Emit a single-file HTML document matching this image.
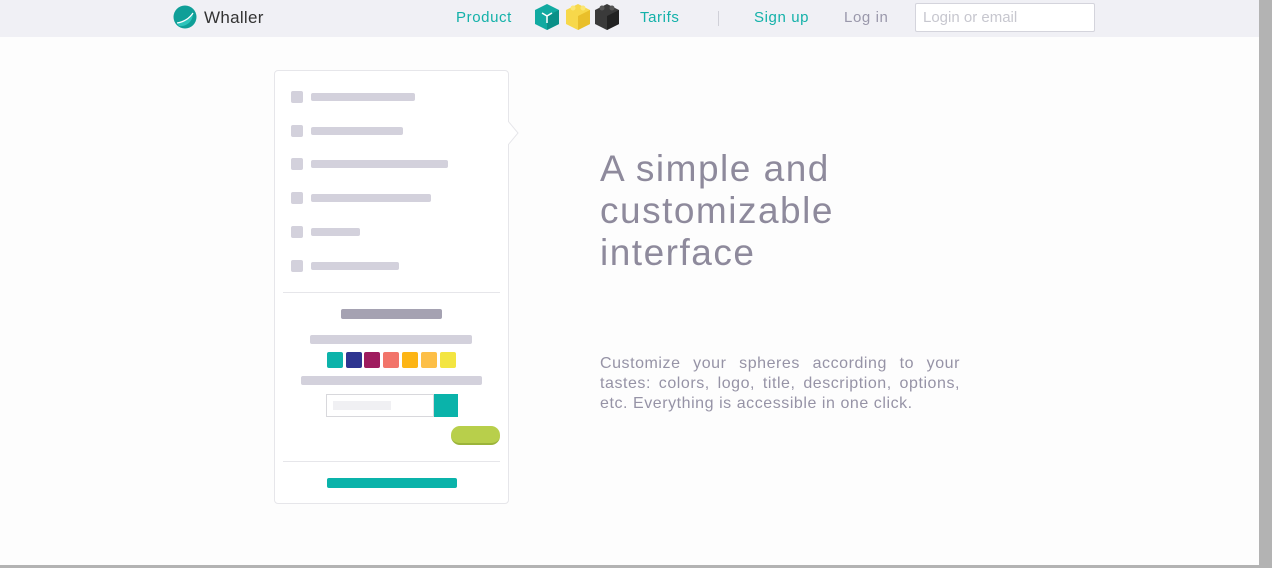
<!DOCTYPE html>
<html><head><meta charset="utf-8"><style>
*{margin:0;padding:0;box-sizing:border-box}
body{width:1272px;height:568px;background:#fdfdfd;font-family:"Liberation Sans",sans-serif;position:relative;overflow:hidden}
.hdr{position:absolute;left:0;top:0;width:1259px;height:37px;background:#f0f0f5}
.sb{position:absolute;left:1259px;top:0;width:13px;height:568px;background:#b3b3b3}
.sbt{position:absolute;left:1259px;top:0;width:13px;height:35px;background:#a7a6ad}
.bb{position:absolute;left:0;top:565px;width:1259px;height:3px;background:#b3b3b3}
.a{position:absolute;font-size:15px;color:#13b1a9;top:9px;letter-spacing:0.6px}
.card{position:absolute;left:274px;top:70px;width:235px;height:434px;background:#fff;border:1px solid #e6e6ea;border-radius:4px}
.b{position:absolute;background:#d3d1dc;border-radius:2px}
.sq{position:absolute;width:12px;height:12px;background:#d3d1dc;border-radius:2px}
.c{position:absolute;top:352px;width:16px;height:16px;border-radius:2px}
</style></head><body>
<div class="hdr"></div>
<div class="sbt"></div><div class="sb"></div><div class="bb"></div>
<svg style="position:absolute;left:173px;top:5px" width="24" height="24" viewBox="0 0 24 24"><circle cx="12" cy="12" r="11.5" fill="#0f9f98"/><path d="M4 18 C10 17 16 14 20 8 C20 16 14 22 6 21Z" fill="#2cc4bb"/><path d="M4 18 C10 17 16 14 20 8" stroke="#fff" stroke-width="1.2" fill="none"/></svg>
<div style="position:absolute;left:204px;top:8px;font-size:17px;color:#333;letter-spacing:0.3px">Whaller</div>
<div class="a" style="left:456px">Product</div>
<svg style="position:absolute;left:534px;top:3px" width="88" height="28" viewBox="0 0 88 28">
<path d="M1 7 L13 1 L25 7 L25 21 L13 27 L1 21Z" fill="#11aaa1"/><path d="M13 13 L25 7 L25 21 L13 27Z" fill="#0a9088"/><path d="M8 10 L13 13 L18 10 M13 13 L13 20" stroke="#fff" stroke-width="1.5" fill="none"/>
<path d="M32 7 L44 1 L56 7 L56 21 L44 27 L32 21Z" fill="#f7d84a"/><path d="M44 13 L56 7 L56 21 L44 27Z" fill="#e9bf2a"/><circle cx="39" cy="5" r="2.5" fill="#fbe673"/><circle cx="49" cy="5" r="2.5" fill="#fbe673"/>
<path d="M61 7 L73 1 L85 7 L85 21 L73 27 L61 21Z" fill="#3a3a3a"/><path d="M73 13 L85 7 L85 21 L73 27Z" fill="#222"/><circle cx="68" cy="5" r="2.5" fill="#555"/><circle cx="78" cy="5" r="2.5" fill="#555"/>
</svg>
<div class="a" style="left:640px">Tarifs</div>
<div style="position:absolute;left:718px;top:11px;width:1px;height:15px;background:#d0d0d8"></div>
<div class="a" style="left:754px">Sign up</div>
<div class="a" style="left:844px;color:#9a98ab">Log in</div>
<div style="position:absolute;left:915px;top:3px;width:180px;height:29px;border:1px solid #d4d4dc;background:#fff;border-radius:2px;font-size:15px;color:#c7c7cf;padding:5px 7px">Login or email</div>
<div class="card">
<svg style="position:absolute;left:233px;top:50px" width="12" height="24"><path d="M0 0 L10 12 L0 24" fill="#fff" stroke="#e6e6ea"/></svg>
<div class="sq" style="left:16px;top:20px"></div><div class="b" style="left:36px;top:22px;width:104px;height:8px"></div>
<div class="sq" style="left:16px;top:54px"></div><div class="b" style="left:36px;top:56px;width:92px;height:8px"></div>
<div class="sq" style="left:16px;top:87px"></div><div class="b" style="left:36px;top:89px;width:137px;height:8px"></div>
<div class="sq" style="left:16px;top:121px"></div><div class="b" style="left:36px;top:123px;width:120px;height:8px"></div>
<div class="sq" style="left:16px;top:155px"></div><div class="b" style="left:36px;top:157px;width:49px;height:8px"></div>
<div class="sq" style="left:16px;top:189px"></div><div class="b" style="left:36px;top:191px;width:88px;height:8px"></div>
<div style="position:absolute;left:8px;top:221px;width:217px;height:1px;background:#e6e6ea"></div>
<div class="b" style="left:66px;top:238px;width:101px;height:10px;background:#a5a2b2"></div>
<div class="b" style="left:35px;top:264px;width:162px;height:9px"></div>
</div>
<div class="c" style="left:327px;background:#0cb3aa"></div>
<div class="c" style="left:346px;background:#2e3590"></div>
<div class="c" style="left:364px;background:#9e1c5e"></div>
<div class="c" style="left:383px;background:#f2746a"></div>
<div class="c" style="left:402px;background:#fdb515"></div>
<div class="c" style="left:421px;background:#fdbf47"></div>
<div class="c" style="left:440px;background:#f3e541"></div>
<div class="b" style="left:301px;top:376px;width:181px;height:9px"></div>
<div style="position:absolute;left:326px;top:394px;width:108px;height:23px;border:1px solid #d8d8dc;background:#fff"></div>
<div style="position:absolute;left:333px;top:401px;width:58px;height:9px;background:#f0f0f3"></div>
<div style="position:absolute;left:434px;top:394px;width:24px;height:23px;background:#0ab3aa"></div>
<div style="position:absolute;left:451px;top:426px;width:49px;height:19px;background:#b8cf4b;border-radius:9px;border-bottom:2px solid #9bb43a"></div>
<div style="position:absolute;left:283px;top:461px;width:217px;height:1px;background:#e6e6ea"></div>
<div style="position:absolute;left:327px;top:478px;width:130px;height:10px;background:#0ab3aa;border-radius:2px"></div>
<div style="position:absolute;left:600px;top:148px;font-size:37px;line-height:42px;color:#8e8a9c;letter-spacing:1.5px">A simple and<br>customizable<br>interface</div>
<div style="position:absolute;left:600px;top:354px;width:360px;font-size:16px;line-height:20px;color:#9693a6;text-align:justify;letter-spacing:0.55px">Customize your spheres according to your tastes: colors, logo, title, description, options, etc. Everything is accessible in one click.</div>
</body></html>
